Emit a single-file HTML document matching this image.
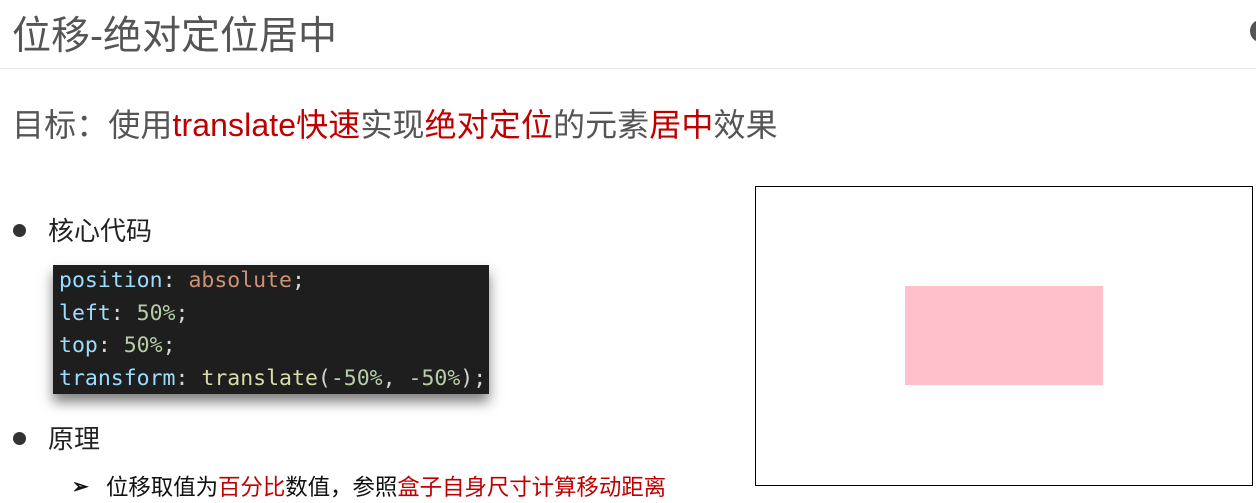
<!DOCTYPE html>
<html><head><meta charset="utf-8"><style>
body{margin:0;width:1256px;height:502px;overflow:hidden;background:#fff;position:relative;font-family:"Liberation Sans","Noto Sans CJK SC",sans-serif}
.a{position:absolute;white-space:nowrap}
.r{color:#c00000}
.code{position:absolute;left:53px;top:265px;width:436px;height:129px;background:#1e1e1e;box-shadow:0 8px 12px rgba(0,0,0,.5);font-family:"DejaVu Sans Mono","Liberation Mono",monospace;font-size:21.5px;line-height:32.5px;padding:0 0 0 6px;box-sizing:border-box;color:#d4d4d4;letter-spacing:0}
.k{color:#9cdcfe}.s{color:#ce9178}.n{color:#b5cea8}.f{color:#dcdcaa}
.dot{position:absolute;width:13px;height:13px;border-radius:50%;background:#333}
</style></head><body>
<div class="a" style="left:12px;top:12px;font-size:39px;color:#555;line-height:50px">位移-绝对定位居中</div>
<div class="a" style="left:1250px;top:20px;width:20px;height:22px;border-radius:50%;background:#555"></div>
<div class="a" style="left:0;top:68px;width:1256px;height:1px;background:#e8e8e8"></div>
<div class="a" style="left:12px;top:104px;font-size:32px;color:#555;line-height:42px;letter-spacing:0.1px">目标：使用<span class="r">translate快速</span>实现<span class="r">绝对定位</span>的元素<span class="r">居中</span>效果</div>
<div class="dot" style="left:13px;top:224px"></div>
<div class="a" style="left:48px;top:214px;font-size:26px;color:#222;line-height:34px">核心代码</div>
<div class="code"><div><span class="k">position</span>: <span class="s">absolute</span>;</div><div><span class="k">left</span>: <span class="n">50%</span>;</div><div><span class="k">top</span>: <span class="n">50%</span>;</div><div><span class="k">transform</span>: <span class="f">translate</span>(<span class="n">-50%</span>, <span class="n">-50%</span>);</div></div>
<div class="dot" style="left:13px;top:432px"></div>
<div class="a" style="left:48px;top:422px;font-size:26px;color:#222;line-height:34px">原理</div>
<div class="a" style="left:72px;top:474px;font-size:20px;color:#111;font-weight:bold">➢</div>
<div class="a" style="left:106px;top:473px;font-size:22.5px;color:#111;line-height:30px;letter-spacing:-0.1px">位移取值为<span class="r">百分比</span>数值，参照<span class="r">盒子自身尺寸计算移动距离</span></div>
<div class="a" style="left:755px;top:186px;width:496px;height:298px;border:1px solid #000"></div>
<div class="a" style="left:905px;top:286px;width:198px;height:99px;background:#ffc0cb"></div>
</body></html>
